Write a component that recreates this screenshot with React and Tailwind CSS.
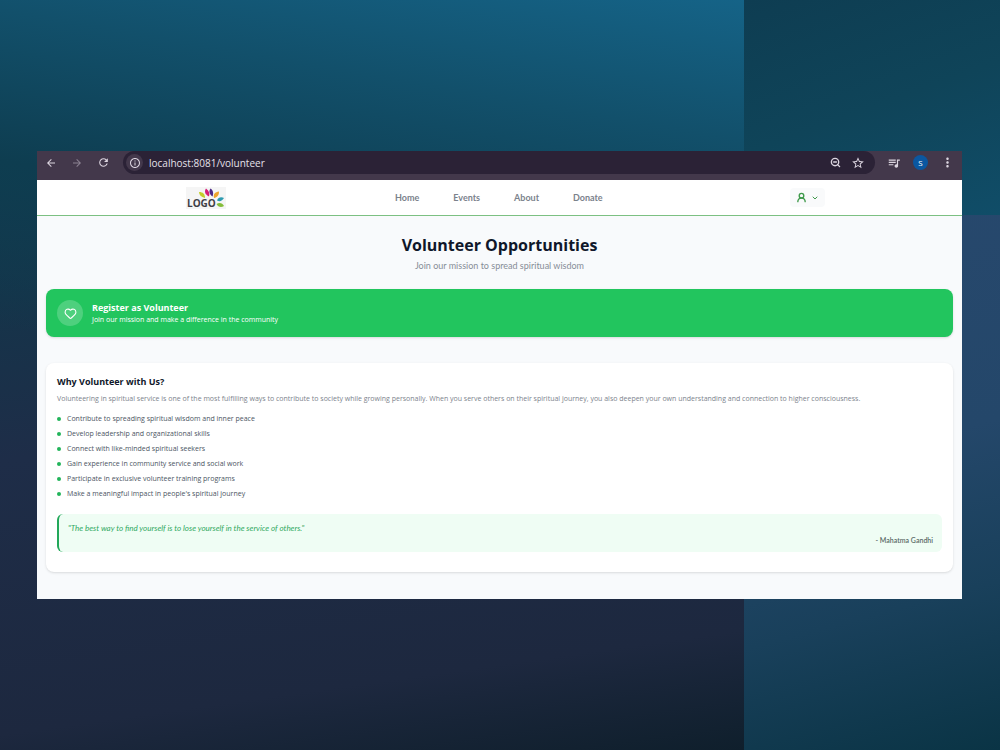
import React from "react";
import { MdArrowBack, MdArrowForward, MdRefresh, MdStarBorder, MdOutlineInfo, MdQueueMusic, MdMoreVert } from "react-icons/md";
import { Heart, UserRound, ChevronDown, ZoomOut } from "lucide-react";

const links = ["Home", "Events", "About", "Donate"];

const benefits = [
  "Contribute to spreading spiritual wisdom and inner peace",
  "Develop leadership and organizational skills",
  "Connect with like-minded spiritual seekers",
  "Gain experience in community service and social work",
  "Participate in exclusive volunteer training programs",
  "Make a meaningful impact in people's spiritual journey",
];

function Backdrop() {
  return (
    <div aria-hidden="true" className="absolute inset-0 flex">
      <div className="w-[74.4%] bg-[linear-gradient(190deg,#156387_0%,#12506b_16%,#0e3d50_33%,#0e3d5000_52%),linear-gradient(172deg,#0e3d50_0%,#15344a_35%,#1e2d48_54%,#1d283f_86%,#0f1f2c_100%)]" />
      <div className="flex flex-1 flex-col">
        <div className="h-[28.7%] bg-[linear-gradient(160deg,#0e3d52_0%,#0f4459_50%,#104d68_100%)]" />
        <div className="flex-1 bg-[linear-gradient(165deg,#27486d_0%,#24476a_45%,#19405b_72%,#0a3445_100%)]" />
      </div>
    </div>
  );
}

function Logo() {
  return (
    <svg viewBox="0 0 40 22" className="h-[22px] w-10" role="img" aria-label="Logo">
      <rect width="40" height="22" fill="#f5f5f5" />
      <text x="1" y="20" fontSize="10" fontWeight="700" fill="#3f3f46" fontFamily="'Open Sans', 'Noto Sans', sans-serif">LOGO</text>
      <path d="M19 11c-4-1-6-3-6-6 4 0 6 2 6 6z" fill="#c3cf2b" />
      <path d="M23 9.500c-4-2-5-5-3-8 3 2 4 5 3 8z" fill="#d61f78" />
      <path d="M26.500 9.500c-3-2-4-5-2-8 3 2 3 5 2 8z" fill="#4b2a86" />
      <path d="M28 11c-1-4 1-6 5-6.500 0 4-2 6-5 6.500z" fill="#eea52c" />
      <path d="M31 13.500c1-3 4-4 7-2.500-2 3-4 4-7 2.500z" fill="#2d9bb0" />
      <path d="M30.500 17c3-2 6-1 7.500 2-3 2-6 1-7.500-2z" fill="#84bd3a" />
    </svg>
  );
}

function BrowserBar() {
  return (
    <div className="flex h-[29px] items-start bg-[#43384b] pl-[7px] text-[#dcd5e0]">
      <div className="flex h-[23px] items-center gap-3">
        <button aria-label="Back" className="grid size-3.5 place-items-center"><MdArrowBack size={12} /></button>
        <button aria-label="Forward" className="grid size-3.5 place-items-center text-[#8b8192]"><MdArrowForward size={12} /></button>
        <button aria-label="Reload" className="grid size-3.5 place-items-center"><MdRefresh size={13} /></button>
      </div>
      <div className="ml-[13px] flex h-[23px] min-w-0 flex-1 items-center gap-1.5 rounded-full bg-[#2b2236] pr-2.5 pl-[3px]">
        <button aria-label="Site information" className="grid size-[17px] shrink-0 place-items-center rounded-full bg-[#43384b]"><MdOutlineInfo size={12} /></button>
        <input aria-label="Address" defaultValue="localhost:8081/volunteer" className="min-w-0 flex-1 bg-transparent text-[10px] leading-4 text-[#e6e1ea] outline-none" />
        <button aria-label="Zoom out"><ZoomOut size={11} strokeWidth={3} /></button>
        <button aria-label="Bookmark" className="ml-1"><MdStarBorder size={14} /></button>
      </div>
      <div className="flex h-[23px] items-center gap-3 pr-[7px] pl-3">
        <button aria-label="Media controls"><MdQueueMusic size={14} /></button>
        <button aria-label="Profile" className="size-[15px] rounded-full bg-[#0b57a0] text-center text-[8px] leading-[15px] text-white">S</button>
        <button aria-label="More"><MdMoreVert size={15} /></button>
      </div>
    </div>
  );
}

function SiteHeader() {
  return (
    <header className="flex h-9 items-center border-b border-[#7cc082] bg-white pr-[137px] pl-[149px]">
      <a href="#home" className="shrink-0"><Logo /></a>
      <nav className="ml-[169px] flex gap-[34px] font-['Lato','Noto_Sans',sans-serif] text-[9px] leading-3 font-bold text-[#7b828c]">
        {links.map((l) => <a key={l} href={"#" + l.toLowerCase()}>{l}</a>)}
      </nav>
      <button aria-label="Account menu" className="ml-auto flex h-[19px] items-center gap-1 rounded bg-[#f9fafb] px-1.5 text-[#3f9a4b]">
        <UserRound size={11} strokeWidth={3} />
        <ChevronDown size={8} strokeWidth={3} />
      </button>
    </header>
  );
}

export default function App() {
  return (
    <div className="relative flex min-h-screen items-center py-[37px] pr-[38px] pl-[37px] font-['Open_Sans','Noto_Sans',sans-serif]">
      <Backdrop />
      <div className="relative w-full bg-[#f8fafc]">
        <BrowserBar />
        <SiteHeader />
        <main className="px-[9px] pt-[17px] pb-[27px]">
          <div className="text-center">
            <h1 className="text-[16px] leading-6 font-bold text-[#0f172a]">Volunteer Opportunities</h1>
            <p className="mt-px font-['Lato','Noto_Sans',sans-serif] text-[9px] leading-4 text-[#868d97]">Join our mission to spread spiritual wisdom</p>
          </div>
          <button className="mt-[15px] flex h-12 w-full items-center gap-[9px] rounded-lg bg-[#22c55e] px-[11px] text-left text-white shadow">
            <span className="grid size-[26px] shrink-0 place-items-center rounded-full bg-white/20"><Heart size={13} /></span>
            <span className="flex flex-col">
              <span className="text-[9px] leading-[13px] font-bold">Register as Volunteer</span>
              <span className="text-[7px] leading-3">Join our mission and make a difference in the community</span>
            </span>
          </button>
          <section className="mt-[26px] rounded-lg bg-white px-[11px] pt-3 pb-5 shadow-sm">
            <h2 className="text-[9px] leading-[14px] font-bold text-[#0f172a]">Why Volunteer with Us?</h2>
            <p className="mt-1 text-[7px] leading-3 text-[#7c838d]">Volunteering in spiritual service is one of the most fulfilling ways to contribute to society while growing personally. When you serve others on their spiritual journey, you also deepen your own understanding and connection to higher consciousness.</p>
            <ul className="mt-2 flex flex-col gap-[3px] text-[7px] leading-3 text-[#4b5563]">
              {benefits.map((b) => (
                <li key={b} className="flex items-center gap-1.5"><span className="size-1 rounded-full bg-[#22b45a]" />{b}</li>
              ))}
            </ul>
            <blockquote className="mt-3.5 rounded-md border-l-2 border-[#22a85a] bg-[#effdf4] px-[9px] pt-2 pb-1.5 font-['Lato','Noto_Sans',sans-serif]">
              <p className="text-[8px] leading-3 text-[#2fa95f] italic">"The best way to find yourself is to lose yourself in the service of others."</p>
              <footer className="text-right text-[7px] leading-3 font-semibold text-[#5b6b68]">- Mahatma Gandhi</footer>
            </blockquote>
          </section>
        </main>
      </div>
    </div>
  );
}
